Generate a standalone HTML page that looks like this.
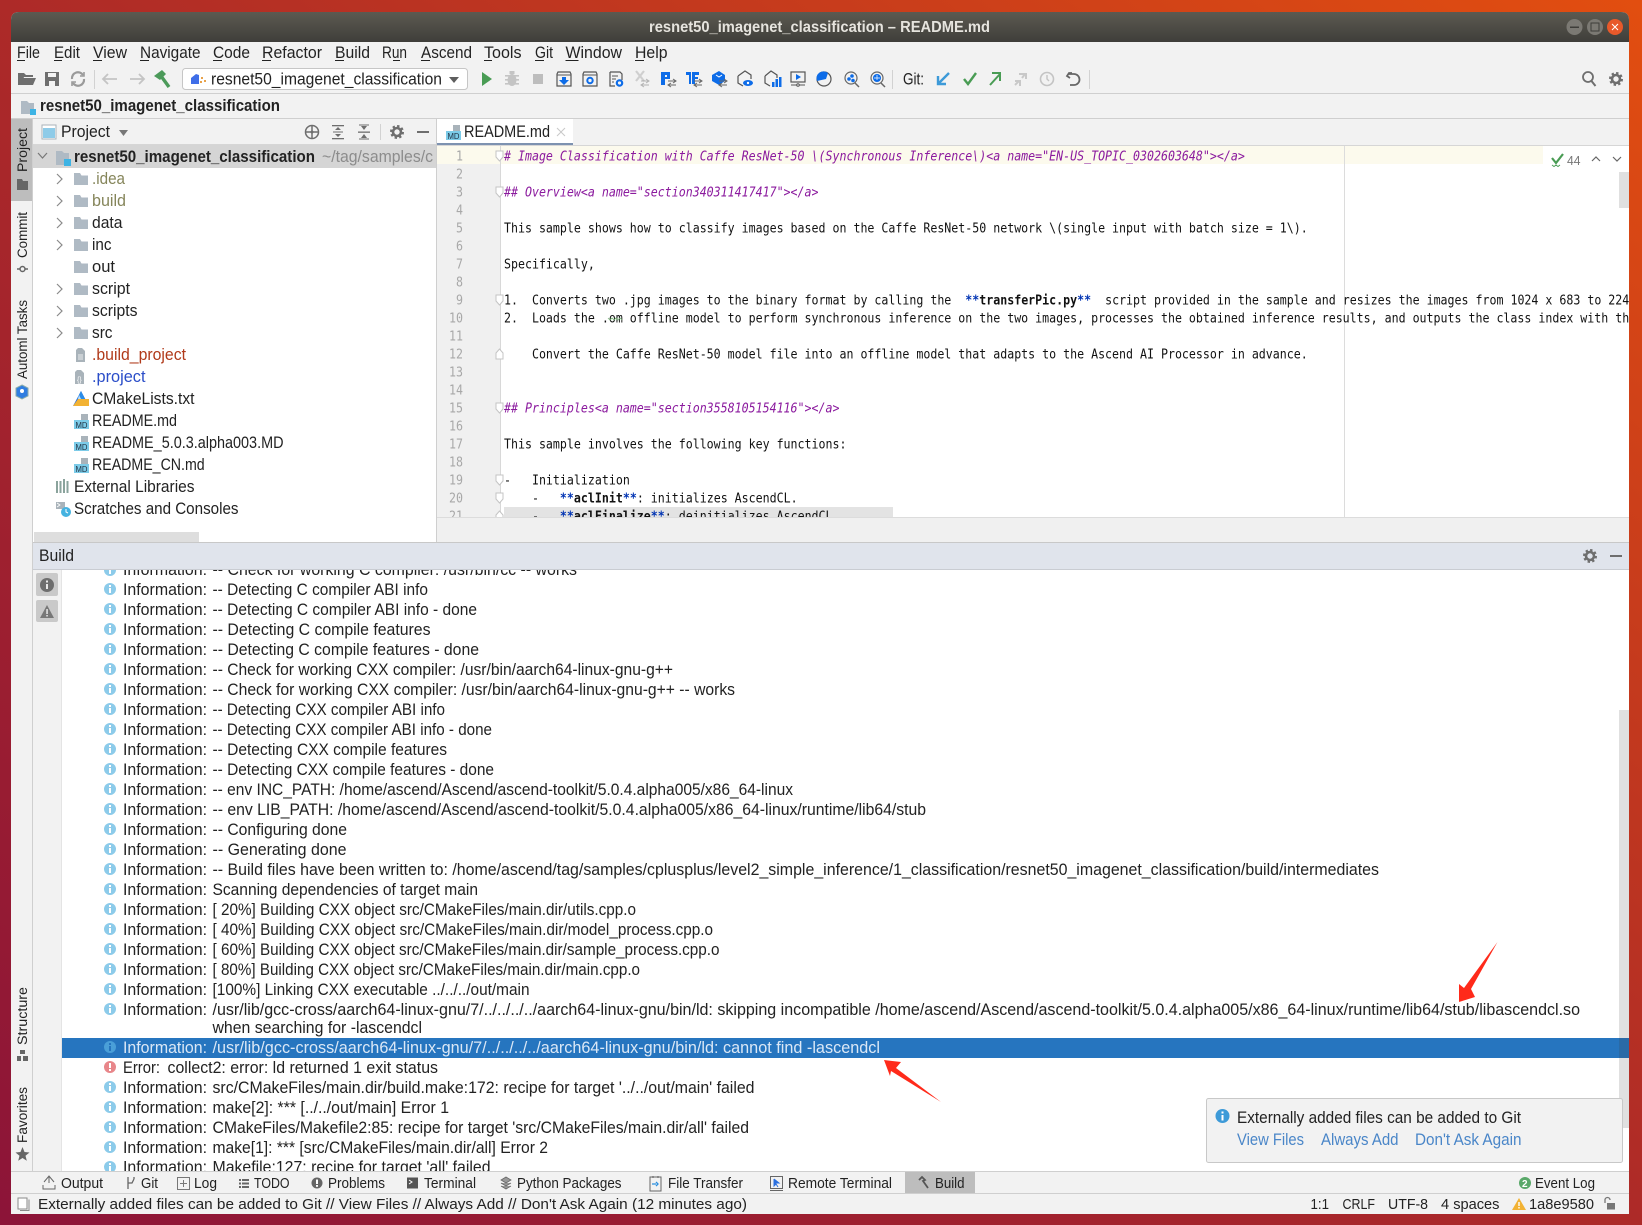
<!DOCTYPE html>
<html lang="en"><head><meta charset="utf-8"><title>resnet50_imagenet_classification – README.md</title>
<style>
html,body{margin:0;padding:0;width:1642px;height:1225px;overflow:hidden;background:linear-gradient(to top right,#8c1438 0%,#ad2a28 50%,#e24e10 100%)}
svg{display:block}
text{font-family:"Liberation Sans",sans-serif;font-size:16.2px;fill:#222;white-space:pre}
.m text,text.m{font-family:"DejaVu Sans Mono","Liberation Mono",monospace;font-size:13.5px;fill:#111}
.h{font-style:italic;fill:#8b1a9e!important}
.n text{fill:#a8a8a8}
.b{font-weight:bold}
.st{fill:#0033b3;font-weight:bold}
.sm{font-size:15.2px}
</style></head><body>
<svg xmlns="http://www.w3.org/2000/svg" width="1642" height="1225" viewBox="0 0 1642 1225">
<defs>
<linearGradient id="tb" x1="0" y1="0" x2="0" y2="1"><stop offset="0" stop-color="#5c5a51"/><stop offset="1" stop-color="#3f3e3a"/></linearGradient>
<clipPath id="ed"><rect x="437" y="146" width="1192" height="371"/></clipPath>
<clipPath id="lg"><rect x="62" y="570" width="1567" height="601"/></clipPath>
<clipPath id="tr"><rect x="33" y="145" width="403" height="397"/></clipPath>
<symbol id="i" overflow="visible"><circle r="6" fill="#8ccbea"/><rect x="-1" y="-1" width="2" height="5" fill="#fff"/><rect x="-1" y="-4" width="2" height="2" fill="#fff"/></symbol>
<symbol id="f" overflow="visible"><path d="M0 0h6l1.5 2.5H14V12H0z" fill="#afbac4"/></symbol>
<symbol id="md" overflow="visible"><path d="M7 -8h7v6H7z" fill="#a9b3ba"/><rect x="0" y="-2" width="15" height="9" fill="#7ccbe8"/><text x="1.5" y="6" style="font-size:8px;fill:#234" textLength="12" lengthAdjust="spacingAndGlyphs">MD</text></symbol>
<symbol id="g" overflow="visible"><circle r="4" fill="none" stroke="#6e6e6e" stroke-width="2.6"/><circle r="6" fill="none" stroke="#6e6e6e" stroke-width="2" stroke-dasharray="2.4 2.3"/></symbol>
<symbol id="c" overflow="visible"><path d="M-3 -5l5 5-5 5" fill="none" stroke="#8a8a8a" stroke-width="1.2"/></symbol>
<symbol id="ar" overflow="visible"><path d="M-4 -2h8M1 -4l3 2-3 2M4 2H-4M-1 0l-3 2 3 2" fill="none" stroke="#666" stroke-width="1"/></symbol>
<symbol id="fm" overflow="visible"><path d="M-3.5 -5h7v6l-3.5 4-3.5-4z" fill="#fff" stroke="#c4c4c4"/></symbol>
<symbol id="fe" overflow="visible"><path d="M-3.5 5h7v-6l-3.5-4-3.5 4z" fill="#fff" stroke="#c4c4c4"/></symbol>
</defs>

<!-- window -->
<path d="M11 20q0-8 8-8h1602q8 0 8 8v1194H11z" fill="#f2f2f2"/>
<path d="M11 42V20q0-8 8-8h1602q8 0 8 8v22z" fill="url(#tb)"/>
<text x="649" y="32" class="b" style="fill:#e6e4de;font-size:15.5px" textLength="341" lengthAdjust="spacingAndGlyphs">resnet50_imagenet_classification – README.md</text>
<circle cx="1574.5" cy="27" r="8" fill="#7b7973"/><rect x="1570" y="26.5" width="9" height="1.5" fill="#3e3d39"/>
<circle cx="1595" cy="27" r="8" fill="#7b7973"/><rect x="1591" y="23" width="8" height="8" fill="none" stroke="#3e3d39"/>
<circle cx="1615" cy="27" r="8" fill="#e8592a"/><path d="M1612 24l6 6M1618 24l-6 6" stroke="#fff" stroke-width="1"/>

<!-- menu -->
<g>
<text x="17" y="58" textLength="23" lengthAdjust="spacingAndGlyphs">File</text><rect x="17" y="60" width="8" height="1" fill="#222"/>
<text x="54" y="58" textLength="26" lengthAdjust="spacingAndGlyphs">Edit</text><rect x="54" y="60" width="8" height="1" fill="#222"/>
<text x="93" y="58" textLength="34" lengthAdjust="spacingAndGlyphs">View</text><rect x="93" y="60" width="9" height="1" fill="#222"/>
<text x="140" y="58" textLength="60.5" lengthAdjust="spacingAndGlyphs">Navigate</text><rect x="140" y="60" width="9" height="1" fill="#222"/>
<text x="213" y="58" textLength="37" lengthAdjust="spacingAndGlyphs">Code</text><rect x="213" y="60" width="9" height="1" fill="#222"/>
<text x="262" y="58" textLength="60" lengthAdjust="spacingAndGlyphs">Refactor</text><rect x="262" y="60" width="9" height="1" fill="#222"/>
<text x="335" y="58" textLength="35" lengthAdjust="spacingAndGlyphs">Build</text><rect x="335" y="60" width="9" height="1" fill="#222"/>
<text x="382" y="58" textLength="25" lengthAdjust="spacingAndGlyphs">Run</text><rect x="393" y="60" width="7" height="1" fill="#222"/>
<text x="421" y="58" textLength="51" lengthAdjust="spacingAndGlyphs">Ascend</text><rect x="421" y="60" width="9" height="1" fill="#222"/>
<text x="484" y="58" textLength="37.5" lengthAdjust="spacingAndGlyphs">Tools</text><rect x="484" y="60" width="8" height="1" fill="#222"/>
<text x="535" y="58" textLength="18" lengthAdjust="spacingAndGlyphs">Git</text><rect x="535" y="60" width="9" height="1" fill="#222"/>
<text x="565.5" y="58" textLength="56.5" lengthAdjust="spacingAndGlyphs">Window</text><rect x="565.5" y="60" width="13" height="1" fill="#222"/>
<text x="635" y="58" textLength="32.5" lengthAdjust="spacingAndGlyphs">Help</text><rect x="635" y="60" width="9" height="1" fill="#222"/>
</g>

<!-- toolbar -->
<g transform="translate(27,79)"><path d="M-9 6V-6h6l2 2h7v2h-9l-3 8z" fill="#6e6e6e"/><path d="M-5 -1H9L6 6H-8z" fill="#6e6e6e"/></g>
<g transform="translate(52,79)"><path d="M-7 -7H7V7H-7z" fill="#6e6e6e"/><rect x="-4" y="-6" width="8" height="4" fill="#f2f2f2"/><rect x="-3" y="2" width="6" height="5" fill="#f2f2f2"/></g>
<g transform="translate(78,79)" fill="none" stroke="#9a9a9a" stroke-width="2.2"><path d="M5 -4A6 6 0 0 0 -6 0M-5 4A6 6 0 0 0 6 0"/><path d="M6 -7v4h-4M-6 7v-4h4" stroke-width="1.6"/></g>
<rect x="94" y="70" width="1" height="19" fill="#d2d2d2"/>
<path d="M117 79H103M108 74l-5 5 5 5" fill="none" stroke="#c4c4c4" stroke-width="1.8"/>
<path d="M130 79H144M139 74l5 5-5 5" fill="none" stroke="#c4c4c4" stroke-width="1.8"/>
<g transform="translate(163,79)"><path d="M-2 -3L6 8" stroke="#4c9a5a" stroke-width="3.4"/><path d="M-9 -3L-1 -9 3 -5-3 1z" fill="#4c9a5a"/></g>
<rect x="182.500" y="68.500" width="285" height="21" rx="3" fill="#fff" stroke="#c6c6c6"/>
<path d="M191 84v-6l5-4 3 1v9z" fill="#3f6ee8"/><path d="M201 77h2v2h-2zM204 80h2v2h-2zM200 81h2v2h-2z" fill="#e8a24a"/>
<text x="211" y="84.500" textLength="231" lengthAdjust="spacingAndGlyphs">resnet50_imagenet_classification</text>
<path d="M449 77h10l-5 6z" fill="#5e5e5e"/>
<path d="M482 72l10 7-10 7z" fill="#499c54"/>
<g transform="translate(512,79)" fill="#c4c4c4"><ellipse cy="1" rx="4.500" ry="6"/><rect x="-7" y="-4" width="14" height="1.600"/><rect x="-7" y="0" width="14" height="1.600"/><rect x="-7" y="4" width="14" height="1.600"/><rect x="-2.500" y="-8" width="5" height="3"/></g>
<rect x="533" y="74" width="10" height="10" fill="#bdbdbd"/>
<g transform="translate(564,79)"><path d="M-6 -7H6l1 2V7H-7V-5z" fill="none" stroke="#555" stroke-width="1.2"/><path d="M-7 -4H7" stroke="#555"/><path d="M-2 -2h4v3h3l-5 5-5-5h3z" fill="#0d6ce8"/></g>
<g transform="translate(590,79)"><path d="M-6 -7H6l1 2V7H-7V-5z" fill="none" stroke="#555" stroke-width="1.2"/><path d="M-7 -4H7" stroke="#555"/><circle cy="1.500" r="2.700" fill="none" stroke="#0d6ce8" stroke-width="2"/></g>
<g transform="translate(616,79)"><path d="M-6 -7H4l2 2V1M-1 7H-6V-7" fill="none" stroke="#555" stroke-width="1.2"/><path d="M-4 -3H2M-4 0H0M-4 3H-2" stroke="#555"/><circle cx="3.500" cy="4" r="2.700" fill="none" stroke="#0d6ce8" stroke-width="2.200"/></g>
<g transform="translate(642,79)"><path d="M-6 -8L2 2M2 -8L-6 2" stroke="#cfcfcf" stroke-width="2.200"/><g transform="translate(3,4)" opacity=".45"><use href="#ar"/></g></g>
<g transform="translate(668,79)"><path d="M-7 -7H2V0H-3V6H-7z" fill="#0d6ce8"/><rect x="-3" y="-4" width="2" height="2" fill="#f2f2f2"/><g transform="translate(4,4)"><use href="#ar"/></g></g>
<g transform="translate(694,79)"><path d="M-8 -7H-3V5H-5V-4H-8zM-2 -7H5V-4H1V-2H4V0H1V5H-2z" fill="#0d6ce8"/><g transform="translate(4,4)"><use href="#ar"/></g></g>
<g transform="translate(719,79)"><path d="M-7 -4L0 -8 6 -4V2L0 6-7 2z" fill="#0d6ce8"/><path d="M-3 -4L0 -2 3 -4" stroke="#fff" fill="none"/><g transform="translate(4,4)"><use href="#ar"/></g></g>
<g transform="translate(745,79)"><path d="M-7 -3L0 -8 6 -4V0M-2 7L-7 4V-3" fill="none" stroke="#555" stroke-width="1.200"/><ellipse cx="3" cy="4" rx="5" ry="3" fill="#0d6ce8"/><circle cx="3" cy="4" r="1.200" fill="#fff"/></g>
<g transform="translate(772,79)"><path d="M-7 -3L-1 -8 5 -4V-1M-2 7L-7 4V-3" fill="none" stroke="#555" stroke-width="1.200"/><path d="M0 3h2.500v5H0zM3.500 0H6v8H3.500zM7 -2h2.500V8H7z" fill="#0d6ce8"/></g>
<g transform="translate(798,79)"><rect x="-7" y="-7" width="14" height="10" fill="none" stroke="#555" stroke-width="1.200"/><path d="M-2 -5l5 3-5 3z" fill="#0d6ce8"/><path d="M-7 6H7" stroke="#555"/><circle cy="6" r="1.300" fill="#f2f2f2" stroke="#555"/></g>
<g transform="translate(824,79)"><circle r="7" fill="none" stroke="#555" stroke-width="1.200"/><path d="M-7 2A7 7 0 0 1 4 -6L2 0z" fill="#0d6ce8"/></g>
<g transform="translate(851,79)"><circle cy="-1" r="6" fill="none" stroke="#666" stroke-width="1.200"/><path d="M4 4l4 4" stroke="#666" stroke-width="1.500"/><circle cx="-2" cy="0" r="1.800" fill="#0d6ce8"/><circle cx="2" cy="1.500" r="1.800" fill="#0d6ce8"/><circle cx="1" cy="-3" r="1.800" fill="#0d6ce8"/></g>
<g transform="translate(877,79)"><circle cy="-1" r="6" fill="none" stroke="#666" stroke-width="1.200"/><path d="M4 4l4 4" stroke="#666" stroke-width="1.500"/><circle cy="-1" r="4" fill="#0d6ce8"/><path d="M-3 -1h6M0 -4v5" stroke="#fff" stroke-width=".7"/></g>
<rect x="892" y="70" width="1" height="19" fill="#d2d2d2"/>
<text x="903" y="84.500" textLength="21" lengthAdjust="spacingAndGlyphs">Git:</text>
<path d="M949 73L939 83M938 76v8h8" fill="none" stroke="#3d9ad8" stroke-width="2.400"/>
<path d="M964 79l4 5 8-11" fill="none" stroke="#499c54" stroke-width="2.400"/>
<path d="M990 85L1000 74M992 73h8v8" fill="none" stroke="#499c54" stroke-width="2"/>
<path d="M1015 85l4-4M1022 78l3-4M1019 74h7v5M1015 81h5v5" fill="none" stroke="#c8c8c8" stroke-width="2"/>
<circle cx="1047" cy="79" r="6.500" fill="none" stroke="#c4c4c4" stroke-width="1.600"/><path d="M1047 75v4l2 2" fill="none" stroke="#c4c4c4" stroke-width="1.400"/>
<path d="M1072 73h-3l-2 3 3 2M1068 74h6a5 5 0 0 1 0 11h-4" fill="none" stroke="#666" stroke-width="1.800"/>
<rect x="1089" y="70" width="1" height="19" fill="#d2d2d2"/>
<circle cx="1588" cy="77" r="5" fill="none" stroke="#6e6e6e" stroke-width="1.800"/><path d="M1591.500 81l4 5" stroke="#6e6e6e" stroke-width="2"/>
<use href="#g" x="1616" y="79"/>
<rect x="11" y="93" width="1618" height="1" fill="#cfcfcf"/>

<!-- navbar -->
<path d="M21 101h6l2 2h5v11H21z" fill="#afbac4"/><rect x="30" y="109" width="6" height="6" fill="#3db3e4"/>
<text x="40" y="111" class="b" textLength="240" lengthAdjust="spacingAndGlyphs">resnet50_imagenet_classification</text>
<rect x="11" y="118" width="1618" height="1" fill="#cfcfcf"/>

<!-- left stripe -->
<rect x="11" y="119" width="21" height="1052" fill="#f2f2f2"/>
<rect x="11" y="119" width="21" height="82" fill="#bdbdbd"/>
<rect x="32" y="119" width="1" height="1052" fill="#cfcfcf"/>
<text transform="translate(27,172) rotate(-90)" style="font-size:13.500px" textLength="44" lengthAdjust="spacingAndGlyphs">Project</text>
<path d="M17 179h5l1 2h5v9H17z" fill="#666"/>
<text transform="translate(27,258) rotate(-90)" style="font-size:13.500px" textLength="46" lengthAdjust="spacingAndGlyphs">Commit</text>
<circle cx="22.500" cy="269" r="2.500" fill="none" stroke="#666" stroke-width="1.500"/><path d="M17 269h3M25 269h3" stroke="#666" stroke-width="1.500"/>
<text transform="translate(27,379) rotate(-90)" style="font-size:13.500px" textLength="79" lengthAdjust="spacingAndGlyphs">Automl Tasks</text>
<path d="M22 385l6 3v8l-6 3-6-3v-8z" fill="#2f7de0" stroke="#8aa" stroke-width="1"/><circle cx="22" cy="391" r="2" fill="#fff"/>
<text transform="translate(27,1045) rotate(-90)" style="font-size:13.500px" textLength="58" lengthAdjust="spacingAndGlyphs">Structure</text>
<path d="M20 1050h5v4h-5zM17 1056h4v5h-4zM23 1056h5v5h-5z" fill="#666"/>
<text transform="translate(27,1143) rotate(-90)" style="font-size:13.500px" textLength="56" lengthAdjust="spacingAndGlyphs">Favorites</text>
<path d="M22.500 1147l2 5 5 .5-4 3.300 1.300 5-4.300-2.800-4.300 2.800 1.300-5-4-3.300 5-.5z" fill="#666"/>

<!-- project header -->
<rect x="42" y="125" width="14" height="14" fill="#fff" stroke="#a9b3ba"/><rect x="43" y="128" width="12" height="10" fill="#8ecbe8"/>
<text x="61" y="137" textLength="49" lengthAdjust="spacingAndGlyphs">Project</text>
<path d="M119 130h9l-4.500 6z" fill="#777"/>
<circle cx="312" cy="132" r="6.500" fill="none" stroke="#6e6e6e" stroke-width="1.500"/><path d="M312 125v14M305 132h14" stroke="#6e6e6e" stroke-width="1.500"/><circle cx="312" cy="132" r="1.500" fill="#6e6e6e"/>
<g fill="#6e6e6e"><rect x="332" y="125" width="12" height="1.300"/><rect x="332" y="138" width="12" height="1.300"/><rect x="333" y="131.500" width="10" height="1"/><path d="M338 127l3 3h-6zM338 137l3-3h-6z"/></g>
<g fill="#6e6e6e"><rect x="358" y="131.500" width="12" height="1.300"/><path d="M364 130l3-4h-6zM364 134l3 4h-6z"/><rect x="359" y="124.500" width="10" height="1"/><rect x="359" y="138.500" width="10" height="1"/></g>
<rect x="380" y="124" width="1" height="16" fill="#d2d2d2"/>
<use href="#g" x="397" y="132"/>
<rect x="417" y="131" width="12" height="2" fill="#6e6e6e"/>
<rect x="33" y="144" width="403" height="1" fill="#d6d6d6"/>

<!-- tree -->
<rect x="33" y="145" width="403" height="397" fill="#fff"/>
<rect x="33" y="145" width="403" height="23" fill="#d5d5d5"/>
<g clip-path="url(#tr)">
<path d="M38 153l4.500 5 4.500-5" fill="none" stroke="#777" stroke-width="1.200"/>
<path d="M56 151h6l2 2h5v12H56z" fill="#afbac4"/><rect x="64" y="159" width="7" height="7" fill="#3db3e4"/>
<text x="74" y="162" class="b" textLength="241" lengthAdjust="spacingAndGlyphs">resnet50_imagenet_classification</text>
<text x="322" y="162" style="fill:#8c8c8c" textLength="111" lengthAdjust="spacingAndGlyphs">~/tag/samples/c</text>
<use href="#c" x="60" y="179"/><use href="#c" x="60" y="201"/><use href="#c" x="60" y="223"/><use href="#c" x="60" y="245"/><use href="#c" x="60" y="289"/><use href="#c" x="60" y="311"/><use href="#c" x="60" y="333"/>
<use href="#f" x="74" y="173"/><use href="#f" x="74" y="195"/><use href="#f" x="74" y="217"/><use href="#f" x="74" y="239"/><use href="#f" x="74" y="261"/><use href="#f" x="74" y="283"/><use href="#f" x="74" y="305"/><use href="#f" x="74" y="327"/>
<text x="92" y="184" style="fill:#85855a" textLength="33" lengthAdjust="spacingAndGlyphs">.idea</text>
<text x="92" y="206" style="fill:#85855a" textLength="34" lengthAdjust="spacingAndGlyphs">build</text>
<text x="92" y="228" textLength="30.500" lengthAdjust="spacingAndGlyphs">data</text>
<text x="92" y="250" textLength="19.500" lengthAdjust="spacingAndGlyphs">inc</text>
<text x="92" y="272" textLength="23" lengthAdjust="spacingAndGlyphs">out</text>
<text x="92" y="294" textLength="38" lengthAdjust="spacingAndGlyphs">script</text>
<text x="92" y="316" textLength="45.500" lengthAdjust="spacingAndGlyphs">scripts</text>
<text x="92" y="338" textLength="20.500" lengthAdjust="spacingAndGlyphs">src</text>
<path d="M78 348h4l3 3v11h-9v-12z" fill="#a9b3ba"/><path d="M78 355h5M78 357h5M78 359h5" stroke="#fff" stroke-width=".8"/>
<text x="92" y="360" style="fill:#b03a1a" textLength="94" lengthAdjust="spacingAndGlyphs">.build_project</text>
<path d="M77 370h4l3 3v11H75v-12z" fill="#a9b3ba"/><text x="77" y="382" style="font-size:7px;fill:#fff">{}</text>
<text x="92" y="382" style="fill:#2a4dc8" textLength="53.500" lengthAdjust="spacingAndGlyphs">.project</text>
<path d="M73 406L81 391 89 406z" fill="#2a6fe0"/><path d="M73 406L78 399H89V406z" fill="#f2b233"/><path d="M81 391L85 399 77 399z" fill="#2b8de8"/><path d="M79 395l2 4h-3z" fill="#fff" opacity=".7"/>
<text x="92" y="404" textLength="102.500" lengthAdjust="spacingAndGlyphs">CMakeLists.txt</text>
<use href="#md" x="74" y="422"/><text x="92" y="426" textLength="85" lengthAdjust="spacingAndGlyphs">README.md</text>
<use href="#md" x="74" y="444"/><text x="92" y="448" textLength="191.500" lengthAdjust="spacingAndGlyphs">README_5.0.3.alpha003.MD</text>
<use href="#md" x="74" y="466"/><text x="92" y="470" textLength="112.700" lengthAdjust="spacingAndGlyphs">README_CN.md</text>
<path d="M56 481h2v12h-2zM59.500 481h2v12h-2zM63 479h2v14h-2zM66.500 481h2v12h-2z" fill="#8aa39c"/>
<text x="74" y="492" textLength="120.500" lengthAdjust="spacingAndGlyphs">External Libraries</text>
<path d="M56 502h9v7h-9z" fill="#a9b3ba"/><path d="M57 503l3 2-3 2" stroke="#fff" fill="none" stroke-width=".8"/><circle cx="66" cy="512" r="5" fill="#45b2e0"/><path d="M66 509v3l2 1" stroke="#fff" fill="none"/>
<text x="74" y="514" textLength="164.500" lengthAdjust="spacingAndGlyphs">Scratches and Consoles</text>
</g>
<rect x="34" y="532" width="165" height="10" fill="#dedede"/>
<rect x="436" y="119" width="1" height="424" fill="#cfcfcf"/>

<!-- editor tab -->
<rect x="437" y="119" width="136" height="24" fill="#fff"/>
<rect x="437" y="143" width="136" height="2.500" fill="#7d92b0"/>
<rect x="437" y="145" width="1192" height="1" fill="#d6d6d6"/>
<use href="#md" x="446" y="133"/>
<text x="464" y="137" textLength="86" lengthAdjust="spacingAndGlyphs">README.md</text>
<path d="M557 128l8 8M565 128l-8 8" stroke="#c8c8c8"/>

<!-- editor -->
<rect x="437" y="146" width="1192" height="371" fill="#fff"/>
<rect x="437" y="146" width="63" height="371" fill="#f0f0f0"/>
<rect x="437" y="146" width="1106" height="18" fill="#fcfaed"/>
<rect x="500" y="146" width="1" height="371" fill="#d8d8d8"/>
<rect x="1344" y="146" width="1" height="371" fill="#dcdcdc"/>
<g clip-path="url(#ed)">
<rect x="504" y="507" width="389" height="18" fill="#e3e3e3"/>
<g class="m n" transform="translate(463,0) scale(.8613,1)" text-anchor="end">
<text y="160.500">1</text><text y="178.500">2</text><text y="196.500">3</text><text y="214.500">4</text><text y="232.500">5</text><text y="250.500">6</text><text y="268.500">7</text><text y="286.500">8</text><text y="304.500">9</text><text y="322.500">10</text><text y="340.500">11</text><text y="358.500">12</text><text y="376.500">13</text><text y="394.500">14</text><text y="412.500">15</text><text y="430.500">16</text><text y="448.500">17</text><text y="466.500">18</text><text y="484.500">19</text><text y="502.500">20</text><text y="520.500">21</text>
</g>
<use href="#fm" x="499.500" y="156"/><use href="#fm" x="499.500" y="192"/><use href="#fm" x="499.500" y="300"/><use href="#fe" x="499.500" y="354"/><use href="#fm" x="499.500" y="408"/><use href="#fm" x="499.500" y="480"/><use href="#fm" x="499.500" y="498"/><use href="#fe" x="499.500" y="516"/>
<g class="m" transform="translate(504,0) scale(.8613,1)">
<text y="160.500" class="h"># Image Classification with Caffe ResNet-50 \(Synchronous Inference\)&lt;a name="EN-US_TOPIC_0302603648"&gt;&lt;/a&gt;</text>
<text y="196.500" class="h">## Overview&lt;a name="section340311417417"&gt;&lt;/a&gt;</text>
<text y="232.500">This sample shows how to classify images based on the Caffe ResNet-50 network \(single input with batch size = 1\).</text>
<text y="268.500">Specifically,</text>
<text y="304.500">1.  Converts two .jpg images to the binary format by calling the  <tspan class="st">**</tspan><tspan class="b">transferPic.py</tspan><tspan class="st">**</tspan>  script provided in the sample and resizes the images from 1024 x 683 to 224 x 224.</text>
<text y="322.500">2.  Loads the .om offline model to perform synchronous inference on the two images, processes the obtained inference results, and outputs the class index with the top confidence</text>
<text y="358.500">    Convert the Caffe ResNet-50 model file into an offline model that adapts to the Ascend AI Processor in advance.</text>
<text y="412.500" class="h">## Principles&lt;a name="section3558105154116"&gt;&lt;/a&gt;</text>
<text y="448.500">This sample involves the following key functions:</text>
<text y="484.500">-   Initialization</text>
<text y="502.500">    -   <tspan class="st">**</tspan><tspan class="b">aclInit</tspan><tspan class="st">**</tspan>: initializes AscendCL.</text>
<text y="520.500">    -   <tspan class="st">**</tspan><tspan class="b">aclFinalize</tspan><tspan class="st">**</tspan>: deinitializes AscendCL.</text>
</g>
<path d="M608 318l2 2 2-2 2 2 2-2 2 2 2-2 2 2" fill="none" stroke="#7cb87c" stroke-width=".8"/>
</g>
<rect x="1543" y="148" width="86" height="16" fill="#fff"/>
<path d="M1552 158l4 5 7-9" fill="none" stroke="#499c54" stroke-width="2.200"/><path d="M1552 165l2 1.500 2-1.500 2 1.500 2-1.500" fill="none" stroke="#499c54" stroke-width=".9"/>
<text x="1567" y="165" style="font-size:13px;fill:#777" textLength="13.500" lengthAdjust="spacingAndGlyphs">44</text>
<path d="M1592 161l4-4 4 4M1613 157l4 4 4-4" fill="none" stroke="#666" stroke-width="1.200"/>
<rect x="1619" y="172" width="10" height="36" fill="#e0e0e0"/>
<rect x="437" y="517" width="1192" height="1" fill="#dcdcdc"/>
<rect x="437" y="518" width="1192" height="24" fill="#f0f0f0"/>

<!-- build panel -->
<rect x="33" y="542" width="1596" height="1" fill="#c8c8c8"/>
<rect x="33" y="543" width="1596" height="26.500" fill="#e0e4ec"/>
<rect x="33" y="569" width="1596" height="1" fill="#c9ccd2"/>
<text x="39" y="561" textLength="35" lengthAdjust="spacingAndGlyphs">Build</text>
<use href="#g" x="1590" y="556"/>
<rect x="1610" y="555" width="12" height="2" fill="#6e6e6e"/>
<rect x="33" y="570" width="29" height="601" fill="#f2f2f2"/>
<rect x="61.500" y="570" width="1" height="601" fill="#d6d6d6"/>
<rect x="36" y="573" width="22" height="23" rx="2" fill="#c9c9c9"/><circle cx="47" cy="585" r="7" fill="#6e6e6e"/><rect x="46" y="584" width="2" height="5" fill="#e8e8e8"/><rect x="46" y="580.500" width="2" height="2" fill="#e8e8e8"/>
<rect x="36" y="600" width="22" height="22" rx="2" fill="#c9c9c9"/><path d="M47 605l7 13H40z" fill="#777"/><rect x="46.300" y="609" width="1.500" height="5" fill="#e8e8e8"/><rect x="46.300" y="615" width="1.500" height="1.500" fill="#e8e8e8"/>
<rect x="62" y="570" width="1567" height="601" fill="#fff"/>
<rect x="1619" y="710" width="10" height="418" fill="#e0e0e0"/>
<rect x="62" y="1038" width="1567" height="20" fill="#2675bf"/>
<rect x="1619" y="1038" width="10" height="20" fill="#2a6aa6"/>
<g clip-path="url(#lg)">
<use href="#i" x="110" y="570"/><text x="123" y="575" textLength="84" lengthAdjust="spacingAndGlyphs">Information:</text><text x="212.500" y="575" textLength="364.500" lengthAdjust="spacingAndGlyphs">-- Check for working C compiler: /usr/bin/cc -- works</text>
<use href="#i" x="110" y="589"/><text x="123" y="595" textLength="84" lengthAdjust="spacingAndGlyphs">Information:</text><text x="212.500" y="595" textLength="215.500" lengthAdjust="spacingAndGlyphs">-- Detecting C compiler ABI info</text>
<use href="#i" x="110" y="609"/><text x="123" y="615" textLength="84" lengthAdjust="spacingAndGlyphs">Information:</text><text x="212.500" y="615" textLength="264.500" lengthAdjust="spacingAndGlyphs">-- Detecting C compiler ABI info - done</text>
<use href="#i" x="110" y="629"/><text x="123" y="635" textLength="84" lengthAdjust="spacingAndGlyphs">Information:</text><text x="212.500" y="635" textLength="218" lengthAdjust="spacingAndGlyphs">-- Detecting C compile features</text>
<use href="#i" x="110" y="649"/><text x="123" y="655" textLength="84" lengthAdjust="spacingAndGlyphs">Information:</text><text x="212.500" y="655" textLength="266.500" lengthAdjust="spacingAndGlyphs">-- Detecting C compile features - done</text>
<use href="#i" x="110" y="669"/><text x="123" y="675" textLength="84" lengthAdjust="spacingAndGlyphs">Information:</text><text x="212.500" y="675" textLength="460.500" lengthAdjust="spacingAndGlyphs">-- Check for working CXX compiler: /usr/bin/aarch64-linux-gnu-g++</text>
<use href="#i" x="110" y="689"/><text x="123" y="695" textLength="84" lengthAdjust="spacingAndGlyphs">Information:</text><text x="212.500" y="695" textLength="522.500" lengthAdjust="spacingAndGlyphs">-- Check for working CXX compiler: /usr/bin/aarch64-linux-gnu-g++ -- works</text>
<use href="#i" x="110" y="709"/><text x="123" y="715" textLength="84" lengthAdjust="spacingAndGlyphs">Information:</text><text x="212.500" y="715" textLength="232.500" lengthAdjust="spacingAndGlyphs">-- Detecting CXX compiler ABI info</text>
<use href="#i" x="110" y="729"/><text x="123" y="735" textLength="84" lengthAdjust="spacingAndGlyphs">Information:</text><text x="212.500" y="735" textLength="279.500" lengthAdjust="spacingAndGlyphs">-- Detecting CXX compiler ABI info - done</text>
<use href="#i" x="110" y="749"/><text x="123" y="755" textLength="84" lengthAdjust="spacingAndGlyphs">Information:</text><text x="212.500" y="755" textLength="234.500" lengthAdjust="spacingAndGlyphs">-- Detecting CXX compile features</text>
<use href="#i" x="110" y="769"/><text x="123" y="775" textLength="84" lengthAdjust="spacingAndGlyphs">Information:</text><text x="212.500" y="775" textLength="281.500" lengthAdjust="spacingAndGlyphs">-- Detecting CXX compile features - done</text>
<use href="#i" x="110" y="789"/><text x="123" y="795" textLength="84" lengthAdjust="spacingAndGlyphs">Information:</text><text x="212.500" y="795" textLength="580.500" lengthAdjust="spacingAndGlyphs">-- env INC_PATH: /home/ascend/Ascend/ascend-toolkit/5.0.4.alpha005/x86_64-linux</text>
<use href="#i" x="110" y="809"/><text x="123" y="815" textLength="84" lengthAdjust="spacingAndGlyphs">Information:</text><text x="212.500" y="815" textLength="713.500" lengthAdjust="spacingAndGlyphs">-- env LIB_PATH: /home/ascend/Ascend/ascend-toolkit/5.0.4.alpha005/x86_64-linux/runtime/lib64/stub</text>
<use href="#i" x="110" y="829"/><text x="123" y="835" textLength="84" lengthAdjust="spacingAndGlyphs">Information:</text><text x="212.500" y="835" textLength="134.500" lengthAdjust="spacingAndGlyphs">-- Configuring done</text>
<use href="#i" x="110" y="849"/><text x="123" y="855" textLength="84" lengthAdjust="spacingAndGlyphs">Information:</text><text x="212.500" y="855" textLength="134" lengthAdjust="spacingAndGlyphs">-- Generating done</text>
<use href="#i" x="110" y="869"/><text x="123" y="875" textLength="84" lengthAdjust="spacingAndGlyphs">Information:</text><text x="212.500" y="875" textLength="1166.500" lengthAdjust="spacingAndGlyphs">-- Build files have been written to: /home/ascend/tag/samples/cplusplus/level2_simple_inference/1_classification/resnet50_imagenet_classification/build/intermediates</text>
<use href="#i" x="110" y="889"/><text x="123" y="895" textLength="84" lengthAdjust="spacingAndGlyphs">Information:</text><text x="212.500" y="895" textLength="265.500" lengthAdjust="spacingAndGlyphs">Scanning dependencies of target main</text>
<use href="#i" x="110" y="909"/><text x="123" y="915" textLength="84" lengthAdjust="spacingAndGlyphs">Information:</text><text x="212.500" y="915" textLength="423.500" lengthAdjust="spacingAndGlyphs">[ 20%] Building CXX object src/CMakeFiles/main.dir/utils.cpp.o</text>
<use href="#i" x="110" y="929"/><text x="123" y="935" textLength="84" lengthAdjust="spacingAndGlyphs">Information:</text><text x="212.500" y="935" textLength="500.500" lengthAdjust="spacingAndGlyphs">[ 40%] Building CXX object src/CMakeFiles/main.dir/model_process.cpp.o</text>
<use href="#i" x="110" y="949"/><text x="123" y="955" textLength="84" lengthAdjust="spacingAndGlyphs">Information:</text><text x="212.500" y="955" textLength="507" lengthAdjust="spacingAndGlyphs">[ 60%] Building CXX object src/CMakeFiles/main.dir/sample_process.cpp.o</text>
<use href="#i" x="110" y="969"/><text x="123" y="975" textLength="84" lengthAdjust="spacingAndGlyphs">Information:</text><text x="212.500" y="975" textLength="427.500" lengthAdjust="spacingAndGlyphs">[ 80%] Building CXX object src/CMakeFiles/main.dir/main.cpp.o</text>
<use href="#i" x="110" y="989"/><text x="123" y="995" textLength="84" lengthAdjust="spacingAndGlyphs">Information:</text><text x="212.500" y="995" textLength="317" lengthAdjust="spacingAndGlyphs">[100%] Linking CXX executable ../../../out/main</text>
<use href="#i" x="110" y="1009"/><text x="123" y="1015" textLength="84" lengthAdjust="spacingAndGlyphs">Information:</text><text x="212.500" y="1015" textLength="1367.500" lengthAdjust="spacingAndGlyphs">/usr/lib/gcc-cross/aarch64-linux-gnu/7/../../../../aarch64-linux-gnu/bin/ld: skipping incompatible /home/ascend/Ascend/ascend-toolkit/5.0.4.alpha005/x86_64-linux/runtime/lib64/stub/libascendcl.so</text>
<text x="212.500" y="1033" textLength="209.500" lengthAdjust="spacingAndGlyphs">when searching for -lascendcl</text>
<circle cx="110" cy="1047" r="6" fill="#4a9fd8"/><rect x="109" y="1046" width="2" height="5" fill="#2675bf"/><rect x="109" y="1043" width="2" height="2" fill="#2675bf"/>
<text x="123" y="1053" style="fill:#dbe8f6" textLength="84" lengthAdjust="spacingAndGlyphs">Information:</text><text x="212.500" y="1053" style="fill:#dbe8f6" textLength="667.500" lengthAdjust="spacingAndGlyphs">/usr/lib/gcc-cross/aarch64-linux-gnu/7/../../../../aarch64-linux-gnu/bin/ld: cannot find -lascendcl</text>
<circle cx="110" cy="1067" r="6" fill="#e8868a"/><rect x="109" y="1063" width="2" height="5" fill="#fff"/><rect x="109" y="1069" width="2" height="2" fill="#fff"/>
<text x="123" y="1073" textLength="37" lengthAdjust="spacingAndGlyphs">Error:</text><text x="167.500" y="1073" textLength="270.500" lengthAdjust="spacingAndGlyphs">collect2: error: ld returned 1 exit status</text>
<use href="#i" x="110" y="1087"/><text x="123" y="1093" textLength="84" lengthAdjust="spacingAndGlyphs">Information:</text><text x="212.500" y="1093" textLength="542" lengthAdjust="spacingAndGlyphs">src/CMakeFiles/main.dir/build.make:172: recipe for target '../../out/main' failed</text>
<use href="#i" x="110" y="1107"/><text x="123" y="1113" textLength="84" lengthAdjust="spacingAndGlyphs">Information:</text><text x="212.500" y="1113" textLength="236.500" lengthAdjust="spacingAndGlyphs">make[2]: *** [../../out/main] Error 1</text>
<use href="#i" x="110" y="1127"/><text x="123" y="1133" textLength="84" lengthAdjust="spacingAndGlyphs">Information:</text><text x="212.500" y="1133" textLength="536.500" lengthAdjust="spacingAndGlyphs">CMakeFiles/Makefile2:85: recipe for target 'src/CMakeFiles/main.dir/all' failed</text>
<use href="#i" x="110" y="1147"/><text x="123" y="1153" textLength="84" lengthAdjust="spacingAndGlyphs">Information:</text><text x="212.500" y="1153" textLength="335.500" lengthAdjust="spacingAndGlyphs">make[1]: *** [src/CMakeFiles/main.dir/all] Error 2</text>
<use href="#i" x="110" y="1167"/><text x="123" y="1172.500" textLength="84" lengthAdjust="spacingAndGlyphs">Information:</text><text x="212.500" y="1172.500" textLength="278" lengthAdjust="spacingAndGlyphs">Makefile:127: recipe for target 'all' failed</text>
</g>

<!-- arrows -->
<path d="M1497.500 942L1471 989 1475 997 1459 1002 1459 984 1464 988z" fill="#ff2a1a"/>
<path d="M884 1060L901 1062 896 1068 941 1102 891 1071 890 1076z" fill="#ff2a1a"/>

<!-- popup -->
<rect x="1206.500" y="1098.500" width="416" height="64" rx="2" fill="#f2f2f2" stroke="#c8c8c8"/>
<circle cx="1222.500" cy="1116" r="7" fill="#3d9ad8"/><rect x="1221.500" y="1115" width="2" height="5.500" fill="#fff"/><rect x="1221.500" y="1111.500" width="2" height="2" fill="#fff"/>
<text x="1237" y="1123" textLength="284" lengthAdjust="spacingAndGlyphs">Externally added files can be added to Git</text>
<text x="1237" y="1145" style="fill:#4a86c8" textLength="67" lengthAdjust="spacingAndGlyphs">View Files</text>
<text x="1321" y="1145" style="fill:#4a86c8" textLength="77.500" lengthAdjust="spacingAndGlyphs">Always Add</text>
<text x="1415" y="1145" style="fill:#4a86c8" textLength="106.500" lengthAdjust="spacingAndGlyphs">Don't Ask Again</text>

<!-- tool stripe -->
<rect x="11" y="1171" width="1618" height="1" fill="#cfcfcf"/>
<rect x="11" y="1172" width="1618" height="21" fill="#f2f2f2"/>
<rect x="905" y="1172" width="70" height="21" fill="#bdbdbd"/>
<path d="M44 1182l5-6 5 6M49 1177v6M43 1185v4h12v-4" fill="none" stroke="#666"/>
<text class="sm" x="61" y="1188" textLength="42" lengthAdjust="spacingAndGlyphs">Output</text>
<path d="M128 1189v-12M128 1183h4l2-4M134 1179v-2" fill="none" stroke="#666" stroke-width="1.300"/>
<text class="sm" x="141" y="1188" textLength="17" lengthAdjust="spacingAndGlyphs">Git</text>
<rect x="177.500" y="1177.500" width="12" height="12" fill="none" stroke="#777"/><path d="M180 1183.500h7M183.500 1180v7" stroke="#777"/>
<text class="sm" x="194" y="1188" textLength="23" lengthAdjust="spacingAndGlyphs">Log</text>
<path d="M239 1179h2v2h-2zM239 1182.500h2v2h-2zM239 1186h2v2h-2zM242 1179h7v2h-7zM242 1182.500h7v2h-7zM242 1186h7v2h-7z" fill="#666"/>
<text class="sm" x="254" y="1188" textLength="35.500" lengthAdjust="spacingAndGlyphs">TODO</text>
<circle cx="317" cy="1183" r="5.500" fill="#666"/><rect x="316" y="1179.500" width="2" height="4.500" fill="#fff"/><rect x="316" y="1185" width="2" height="1.800" fill="#fff"/>
<text class="sm" x="328" y="1188" textLength="57" lengthAdjust="spacingAndGlyphs">Problems</text>
<rect x="407" y="1177.500" width="11" height="11" fill="#555"/><path d="M409 1180l3 2-3 2" stroke="#fff" fill="none"/>
<text class="sm" x="424" y="1188" textLength="52" lengthAdjust="spacingAndGlyphs">Terminal</text>
<path d="M506 1177l5 3-5 3-5-3zM501 1183l5 3 5-3M501 1186l5 3 5-3" fill="#999" stroke="#666" stroke-width=".8"/>
<text class="sm" x="517" y="1188" textLength="104.500" lengthAdjust="spacingAndGlyphs">Python Packages</text>
<rect x="650" y="1177" width="11" height="14" fill="none" stroke="#666"/><path d="M653 1176v2M658 1176v2" stroke="#666"/><path d="M652 1184h4M656 1182l2 2-2 2" stroke="#2a8fe0" fill="none" stroke-width="1.300"/>
<text class="sm" x="668" y="1188" textLength="75" lengthAdjust="spacingAndGlyphs">File Transfer</text>
<rect x="770.500" y="1176.500" width="12" height="12" fill="none" stroke="#666"/><path d="M774 1179v7l2-2 2 3M774 1179l5 4h-3" fill="#2a6fe0" stroke="#2a6fe0"/><path d="M770 1190.500h13" stroke="#666"/>
<text class="sm" x="788" y="1188" textLength="104" lengthAdjust="spacingAndGlyphs">Remote Terminal</text>
<path d="M919 1180l3-3 3 3-2 1 5 7" fill="none" stroke="#555" stroke-width="1.800"/>
<text class="sm" x="935" y="1188" textLength="29.500" lengthAdjust="spacingAndGlyphs">Build</text>
<circle cx="1525" cy="1183" r="6" fill="#59a869"/><text x="1522" y="1187" class="b" style="font-size:10px;fill:#fff">2</text>
<text class="sm" x="1535" y="1188" textLength="60" lengthAdjust="spacingAndGlyphs">Event Log</text>
<rect x="11" y="1193" width="1618" height="1" fill="#cfcfcf"/>

<!-- status bar -->
<rect x="18" y="1198" width="9" height="11" fill="#fff" stroke="#8a8a8a"/><path d="M20 1210.500h9v-11" fill="none" stroke="#8a8a8a"/>
<text class="sm" x="38" y="1209" textLength="709" lengthAdjust="spacingAndGlyphs">Externally added files can be added to Git // View Files // Always Add // Don't Ask Again (12 minutes ago)</text>
<text class="sm" x="1310.500" y="1209" textLength="18.500" lengthAdjust="spacingAndGlyphs">1:1</text>
<text class="sm" x="1342.500" y="1209" textLength="32.500" lengthAdjust="spacingAndGlyphs">CRLF</text>
<text class="sm" x="1388" y="1209" textLength="40" lengthAdjust="spacingAndGlyphs">UTF-8</text>
<text class="sm" x="1441" y="1209" textLength="58.500" lengthAdjust="spacingAndGlyphs">4 spaces</text>
<path d="M1519 1198l7 12h-14z" fill="#f2b233"/><rect x="1518.300" y="1202" width="1.400" height="4" fill="#fff"/><rect x="1518.300" y="1207" width="1.400" height="1.500" fill="#fff"/>
<text class="sm" x="1529" y="1209" textLength="65" lengthAdjust="spacingAndGlyphs">1a8e9580</text>
<path d="M1605 1203v-3a2.500 2.500 0 0 1 5 0" fill="none" stroke="#777" stroke-width="1.300"/><rect x="1607" y="1203" width="8" height="6.500" fill="#777"/>
</svg>
</body></html>
